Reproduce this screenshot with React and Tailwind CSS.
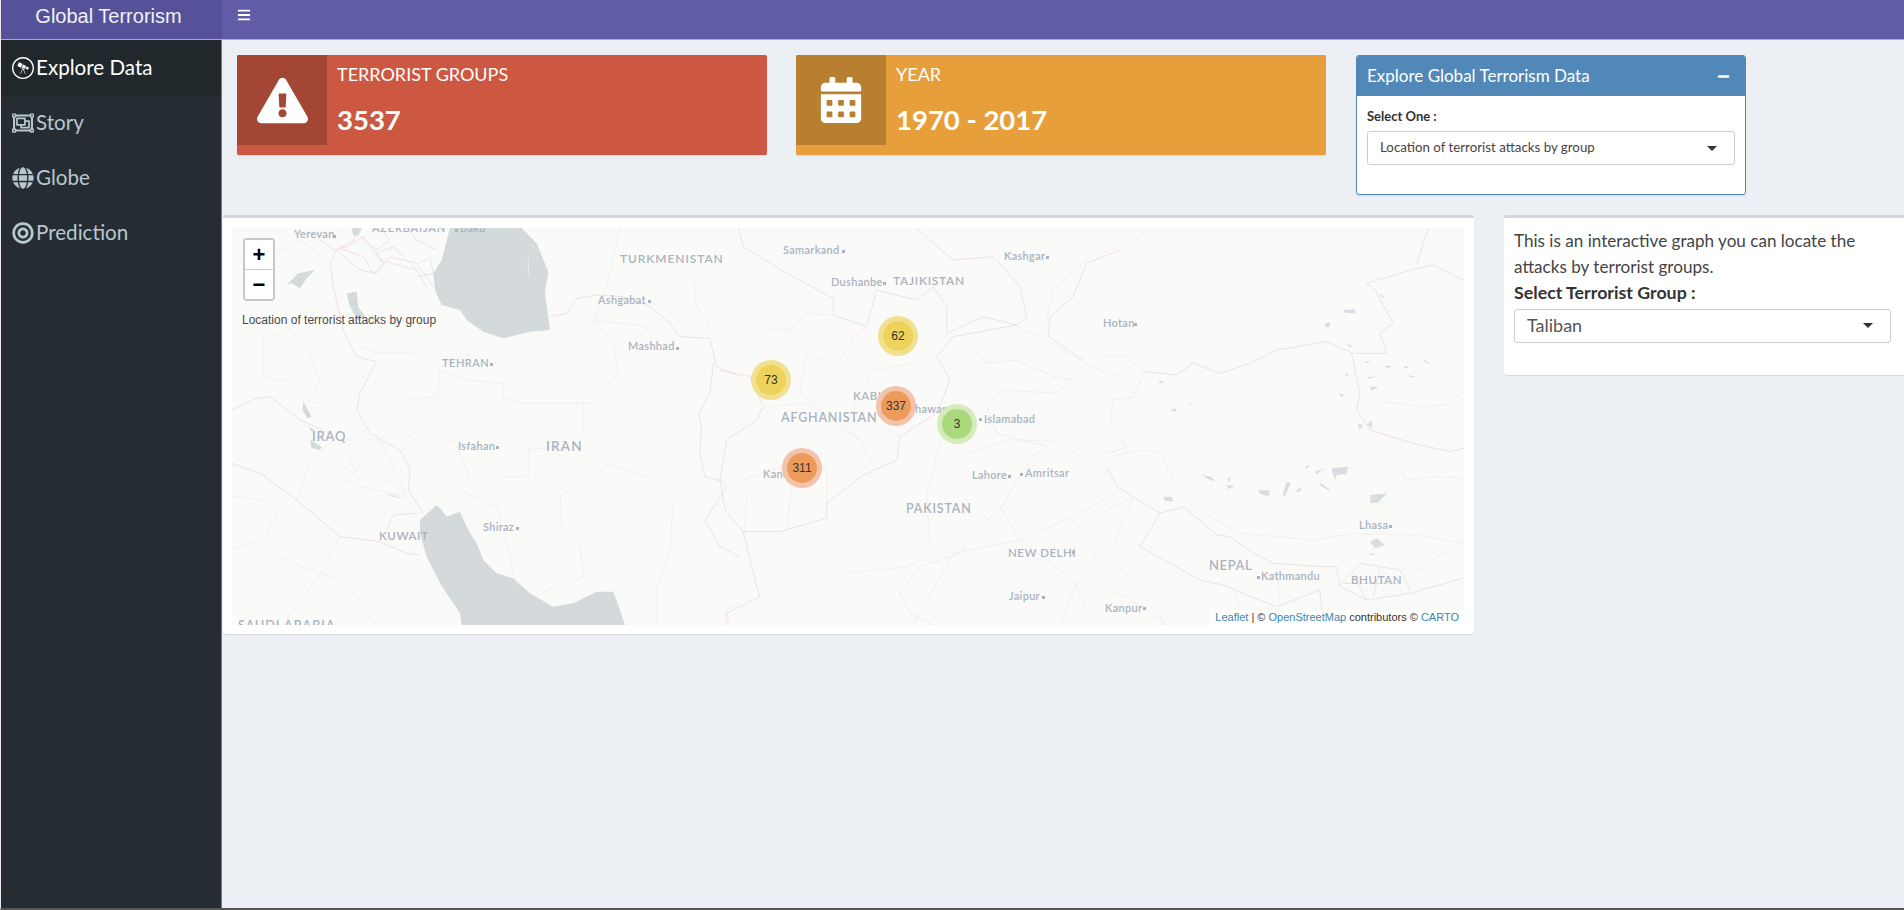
import React from 'react';
import { FaBars, FaBullseye, FaCalendarAlt, FaExclamationTriangle, FaGlobe, FaMinus, FaRegObjectGroup, FaWpexplorer } from 'react-icons/fa';

const navItems = [
  { label: 'Explore Data', icon: FaWpexplorer, active: true },
  { label: 'Story', icon: FaRegObjectGroup },
  { label: 'Globe', icon: FaGlobe },
  { label: 'Prediction', icon: FaBullseye }
];

// page coordinates: x, baseline y, text, font size, letter spacing, dot x, dot y
const labels = [
  [294, 238, 'Yerevan', 11, 0.3, 333, 235],
  [372, 232, 'AZERBAIJAN', 11, 0.8],
  [460, 232, 'Baku', 11, 0.3, 455, 229],
  [620, 263, 'TURKMENISTAN', 12, 0.9],
  [598, 304, 'Ashgabat', 11, 0.3, 648, 300],
  [628, 350, 'Mashhad', 11, 0.3, 676, 347],
  [442, 367, 'TEHRAN', 11, 0.5, 490, 363],
  [458, 450, 'Isfahan', 11, 0.3, 496, 446],
  [546, 451, 'IRAN', 13.5, 1.2],
  [312, 441, 'IRAQ', 13, 0.8],
  [379, 540, 'KUWAIT', 11.5, 0.6],
  [483, 531, 'Shiraz', 11, 0.3, 516, 527],
  [238, 630, 'SAUDI ARABIA', 12.5, 1],
  [783, 254, 'Samarkand', 11, 0.3, 842, 250],
  [831, 286, 'Dushanbe', 11, 0.3, 883, 282],
  [893, 285, 'TAJIKISTAN', 12, 0.7],
  [1004, 260, 'Kashgar', 11, 0.3, 1046, 256],
  [1103, 327, 'Hotan', 11, 0.3, 1134, 323],
  [853, 400, 'KABUL', 11.5, 0.6, 892, 395],
  [781, 422, 'AFGHANISTAN', 12.5, 0.8],
  [897, 413, 'Peshawar', 11, 0.3, 946, 409],
  [984, 423, 'Islamabad', 11, 0.3, 979, 418],
  [763, 478, 'Kandahar', 11, 0.3, 813, 472],
  [972, 479, 'Lahore', 11, 0.3, 1008, 475],
  [1025, 477, 'Amritsar', 11, 0.3, 1020, 473],
  [906, 513, 'PAKISTAN', 12.5, 0.8],
  [1008, 557, 'NEW DELHI', 11.5, 0.5, 1072, 551],
  [1009, 600, 'Jaipur', 11, 0.3, 1042, 596],
  [1105, 612, 'Kanpur', 11, 0.3, 1143, 607],
  [1209, 570, 'NEPAL', 13, 0.6],
  [1261, 580, 'Kathmandu', 11, 0.3, 1257, 576],
  [1351, 584, 'BHUTAN', 11.5, 0.6],
  [1359, 529, 'Lhasa', 11, 0.3, 1389, 525]
];

const clusters = [
  { n: 62, x: 898, y: 336, outer: 'bg-[#f1e08e]', inner: 'bg-[#edd25c]' },
  { n: 73, x: 771, y: 380, outer: 'bg-[#f1e08e]', inner: 'bg-[#edd25c]' },
  { n: 337, x: 896, y: 406, outer: 'bg-[#f3c3ab]', inner: 'bg-[#ed9b5b]' },
  { n: 3, x: 957, y: 424, outer: 'bg-[#d5ebbb]', inner: 'bg-[#a9d97c]' },
  { n: 311, x: 802, y: 468, outer: 'bg-[#f3c3ab]', inner: 'bg-[#ed9b5b]' }
];

function MapDrawing() {
  return (
    <svg viewBox="232 228 1232 397" className="block h-[397px] w-[1232px] bg-[#fafaf9]">
      {/* left part, traced at 3x from (220,220) */}
      <g transform="translate(220 220) scale(0.3333)" fill="none" strokeLinejoin="round" strokeWidth="2.2">
        <g fill="#d4dadc">
          <path d="M690 24L905 24L950 70L985 155L975 220L990 330L930 335L850 355L790 335L740 300L720 270L665 255L645 210L640 160L665 120L675 80Z" />
          <path d="M600 900L650 855L665 870L680 890L720 875L745 930L770 970L790 1020L830 1060L880 1075L930 1120L1000 1160L1060 1150L1130 1115L1180 1115L1200 1170L1215 1215L725 1215L720 1180L660 1090L620 1010L600 940Z" />
          <path d="M200 195L235 160L285 150L260 175L240 205L215 190Z" />
          <path d="M380 220L410 215L415 260L435 290L415 300L390 260Z" />
          <path d="M395 24L425 24L415 48L400 45Z" />
          <path d="M250 545L275 590L262 595L248 570Z" />
          <path d="M270 660L305 680L300 690L275 685Z" />
          <path d="M265 620L285 630L275 635Z" />
          <path d="M495 820L550 835L520 830Z" />
        </g>
        <path d="M925 115L925 165M930 70L960 100" stroke="#f4f5f5" strokeWidth="2" />
        <g stroke="#ebd9dc">
          <path d="M350 90L330 130L340 200L370 330L410 410L470 425L420 520L410 570L450 640L540 690L570 750L565 810L610 880" />
          <path d="M36 730L120 760L230 840L360 950L480 965L560 1000L600 1005" />
          <path d="M990 290L1040 280L1070 235L1130 225L1210 230L1290 260L1350 310L1380 350L1470 355L1490 440L1560 470" />
          <path d="M1480 430L1470 520L1435 580L1445 620L1440 700L1455 770L1510 785L1520 800L1455 900L1500 980L1560 1010" />
          <path d="M36 570L110 535L150 530L240 600L330 640" />
          <path d="M350 90L420 150L470 160L510 110L590 130L640 200" />
          <path d="M500 930L520 885L590 880" />
          <path d="M300 60L340 90L380 80L430 50L480 120L590 150" />
          <path d="M420 24L400 60L360 85L430 110L460 160L490 130L470 100L520 80L560 120L590 150L620 200" />
          <path d="M480 24L510 60L470 90L420 50M560 24L590 60L650 90M600 130L630 110L640 160L590 170" />
        </g>
        <g stroke="#f0e8e8" strokeWidth="1.8">
          <path d="M130 360L130 470L205 485L260 540L330 560" />
          <path d="M420 380L480 400L580 400L660 440L740 400L800 420L850 440" />
          <path d="M850 530L910 550L1120 550L1195 460L1180 370L1120 300L1160 200L1200 24" />
          <path d="M1090 550L1090 630L1000 680L925 690L925 770L850 770L810 800L750 770L700 660L590 660L510 610L570 540L650 530L720 610L790 540" />
          <path d="M1090 625L1165 735L1280 770L1360 850L1350 1000L1310 1100L1310 1215" />
          <path d="M1165 735L1020 830L1025 920L1080 970L1090 1070L960 1120" />
          <path d="M340 760L420 800L560 830L500 700L480 660L340 660L270 720L230 840" />
          <path d="M650 530L660 450L740 480L850 490L850 530" />
          <path d="M36 830L130 840L170 880L130 960L36 990" />
          <path d="M170 1010L300 1060L370 1080L470 1215" />
          <path d="M360 950L300 1060L190 1215" />
          <path d="M1420 170L1430 260L1470 320" />
          <path d="M1530 1215L1520 1170L1560 1150" />
          <path d="M1200 240L1120 300L1290 320L1260 350" />
          <path d="M750 770L720 810L830 860L850 930L890 1100" />
          <path d="M340 720L400 760L450 720L500 780L540 800M380 700L420 780" />
          <path d="M270 400L300 480L265 540M130 380L200 320L270 400" />
          <path d="M120 200L60 120M170 100L240 60L320 120" />
        </g>
      </g>
      {/* middle part, traced at 3x from (720,220) */}
      <g transform="translate(720 220) scale(0.3333)" fill="none" strokeLinejoin="round" strokeWidth="2.2">
        <g stroke="#ebd9dc">
          <path d="M55 24L70 80L200 160L340 235L340 285L440 320L470 210L590 240L640 200L680 260L680 340L790 290L890 315" />
          <path d="M0 450L90 470L130 560L110 600L20 660L0 780L15 870L70 935L180 935L320 895L320 850L430 765L530 720L540 650L600 610L650 580L690 480L650 410L700 350L890 315" />
          <path d="M70 935L110 1100L120 1130L20 1180L20 1215" />
          <path d="M830 120L900 200L920 290L890 315" />
          <path d="M1200 90L1100 130L1060 230L990 290L985 350L1090 420" />
          <path d="M820 110L700 120L640 70L590 24" />
          <path d="M1200 470L1120 445L1000 370L880 315" strokeDasharray="6 6" />
          <path d="M760 380L800 430L890 420L1000 470L1060 480L1010 520L850 510L800 560L830 640L980 680L940 710L880 800L840 870L800 900L720 1000L600 1040L540 1120L570 1180L640 1215" strokeDasharray="7 5" />
        </g>
        <g stroke="#f0e8e8" strokeWidth="1.8">
          <path d="M130 330L210 330L260 280L340 285" />
          <path d="M210 330L260 400L350 440L400 350L440 320" />
          <path d="M130 560L260 550L340 600L430 670L380 620L420 520L460 450L580 430" />
          <path d="M260 400L240 520L340 600L450 600L540 650" />
          <path d="M15 870L70 780L210 730L320 740L320 850" />
          <path d="M215 800L200 925" />
          <path d="M80 830L75 935" />
          <path d="M580 1215L700 1000L900 960L1080 880L1200 810" />
          <path d="M660 670L620 830L630 970" />
          <path d="M380 1060L560 1040L700 960" />
          <path d="M840 860L900 960L1060 1080L1100 1180" />
          <path d="M750 700L860 660L1000 660L1080 710" />
          <path d="M980 300L1000 210L1120 100" />
          <path d="M500 640L430 680L460 740" />
          <path d="M1060 900L1130 1000L1060 1110L1020 1215" />
        </g>
      </g>
      {/* right part, traced at 3x from (1100,220) */}
      <g transform="translate(1100 220) scale(0.3333)" fill="none" strokeLinejoin="round" strokeWidth="2.2">
        <g stroke="#ebd9dc">
          <path d="M140 455L230 465L280 430L360 460L450 430L530 390L680 365L760 400L860 400L840 340L880 310L825 210L800 190L950 145L1000 135L1060 165L1092 180" />
          <path d="M985 24L950 135" />
          <path d="M755 400L780 520L770 570L810 630L940 670L1050 695L1092 685" />
          <path d="M20 740L50 800L180 880L250 860L350 945L390 950L460 1000L520 1030L660 1040L710 1040L720 1100L800 1140L930 1120L1090 1075" />
          <path d="M180 880L120 980L300 1080L370 1095L450 1130L530 1160L660 1110L665 1170" />
          <path d="M715 1100L780 1030L900 1050L930 1110M760 1060L800 1140M840 1050L820 1130M730 1090L900 1090" />
          <path d="M940 1060L1090 960" strokeDasharray="6 5" />
          <path d="M0 410L70 405L135 455L100 530L40 540L30 600L80 680L30 700L0 690" strokeDasharray="6 5" />
        </g>
        <g stroke="#f0e8e8" strokeWidth="1.8">
          <path d="M0 100L90 70L150 24" />
          <path d="M850 545L970 560L1040 555L1092 515" />
          <path d="M30 710L130 690L190 700L205 750L220 780" />
          <path d="M280 860L420 940L640 960L760 940L950 945L1092 970" />
          <path d="M890 725L920 780L1000 770L1092 775" />
          <path d="M0 880L100 830L30 1000L200 1215" />
          <path d="M0 1110L80 1130L200 1215" />
          <path d="M310 1000L360 950" />
          <path d="M530 1040L540 1160M400 1100L420 1160" />
        </g>
        <g fill="#d8dde0">
          <path d="M730 270L765 268L765 280L735 278Z" />
          <path d="M676 310L692 308L688 322L676 320Z" />
          <path d="M742 370L765 385L745 378Z" />
          <path d="M840 222L858 235L842 230Z" />
          <path d="M797 422L813 426L797 428Z" />
          <path d="M855 435L880 440L860 444Z" />
          <path d="M912 437L930 440L915 446Z" />
          <path d="M970 418L995 432L975 426Z" />
          <path d="M800 470L830 470L805 476Z" />
          <path d="M925 465L945 470L930 472Z" />
          <path d="M810 500L835 500L815 512Z" />
          <path d="M735 458L748 470L738 468Z" />
          <path d="M715 520L735 526L722 530Z" />
          <path d="M775 612L790 615L778 630Z" />
          <path d="M800 615L815 600L818 625Z" />
          <path d="M175 483L195 484L180 490Z" />
          <path d="M210 570L232 565L225 575Z" />
          <path d="M262 545L278 560L265 552Z" />
          <path d="M305 765L335 770L345 785L320 775Z" />
          <path d="M380 795L405 798L385 808Z" />
          <path d="M382 775L392 772L388 790Z" />
          <path d="M475 810L510 812L505 828L480 822Z" />
          <path d="M560 785L572 788L555 830L548 825Z" />
          <path d="M585 815L605 800L600 815Z" />
          <path d="M660 788L692 810L688 812L660 795Z" />
          <path d="M645 755L675 745L650 762Z" />
          <path d="M695 745L745 740L740 762L710 765L705 780L698 760Z" />
          <path d="M615 740L630 735L620 746Z" />
          <path d="M810 825L860 820L835 848L812 850Z" />
          <path d="M190 830L215 830L220 845L195 842Z" />
          <path d="M810 965L830 955L855 975L825 985Z" />
          <path d="M805 1000L828 1002L812 1006Z" />
        </g>
      </g>
      <g className="font-['Lato']" fill="#aab3bf" fontWeight="600">
        {labels.map(([x, y, text, size, spacing, dotX, dotY]) => (
          <g key={text}>
            <text x={x} y={y} fontSize={size} letterSpacing={spacing}>{text}</text>
            {dotX ? <rect x={dotX} y={dotY} width="3" height="3" /> : null}
          </g>
        ))}
      </g>
    </svg>
  );
}

function InfoBox({ icon: Icon, iconSize, title, value, bar, dark }) {
  return (
    <div className={`flex h-[100px] w-[530px] shrink-0 items-start rounded-[2px] ${bar} text-white shadow-[0_1px_1px_rgba(0,0,0,0.1)]`}>
      <div className={`flex h-[90px] w-[90px] shrink-0 items-center justify-center rounded-tl-[2px] ${dark}`}>
        <Icon className={iconSize} />
      </div>
      <div className="pl-[10px] pt-[7px]">
        <div className="text-[18px] leading-[24px]">{title}</div>
        <div className="mt-[16px] text-[27.5px] font-bold leading-[36px]">{value}</div>
      </div>
    </div>
  );
}

function Caret() {
  return <span className="h-0 w-0 border-x-[5px] border-t-[5px] border-x-transparent border-t-[#333]" />;
}

export default function App() {
  return (
    <div className="flex h-[910px] w-[1904px] flex-col overflow-hidden border-b-2 border-l border-b-[#555] border-l-[#e8e8e8] bg-[#ecf0f5] font-['Lato',sans-serif] text-[#333]">
      <header className="flex h-[40px] shrink-0 border-b border-b-[#a9a7d4]">
        <div className="flex w-[221px] items-center justify-center bg-[#555299] pb-[8px] pr-[6px] font-['Liberation_Sans',sans-serif] text-[20px] text-[#f1f1f6]">
          Global Terrorism
        </div>
        <div className="flex flex-1 items-center bg-[#605ca8] pb-[9px] pl-[15px] text-white">
          <FaBars className="text-[14px]" />
        </div>
      </header>

      <div className="flex min-h-0 flex-1">
        <aside className="w-[221px] shrink-0 border-r border-r-[#777c80] bg-[#252d33]">
          {navItems.map(({ label, icon: Icon, active }) => (
            <div
              key={label}
              className={`flex h-[55px] items-center gap-[2px] pl-[11px] text-[20.6px] ${active ? 'bg-[#20282c] text-white' : 'text-[#b8c7ce]'}`}
            >
              <Icon className="text-[22px]" />
              <span>{label}</span>
            </div>
          ))}
        </aside>

        <main className="min-w-0 flex-1">
          <div className="flex items-start pl-[15px] pt-[15px]">
            <InfoBox
              icon={FaExclamationTriangle}
              iconSize="text-[51px]"
              title="TERRORIST GROUPS"
              value="3537"
              bar="bg-[#cd5842]"
              dark="bg-[#a44634]"
            />
            <div className="ml-[29px]">
              <InfoBox
                icon={FaCalendarAlt}
                iconSize="text-[46px]"
                title="YEAR"
                value="1970 - 2017"
                bar="bg-[#e79f3c]"
                dark="bg-[#b97f30]"
              />
            </div>
            <section className="ml-[30px] h-[140px] w-[390px] shrink-0 overflow-hidden rounded-[3px] border border-[#5288b8] bg-white shadow-[0_1px_1px_rgba(0,0,0,0.1)]">
              <div className="flex h-[40px] items-center justify-between bg-[#5288b8] pl-[10px] pr-[15px] text-[17px] text-white">
                <span>Explore Global Terrorism Data</span>
                <FaMinus className="text-[13px]" />
              </div>
              <div className="px-[10px] pt-[10px]">
                <div className="text-[13px] font-bold leading-[20px]">Select One :</div>
                <div className="mt-[5px] flex h-[34px] items-center justify-between rounded-[3px] border border-[#ccc] pl-[12px] pr-[17px] text-[13.3px] text-[#444]">
                  <span>Location of terrorist attacks by group</span>
                  <Caret />
                </div>
              </div>
            </section>
          </div>

          <div className="mt-[20px] flex items-start pl-[1px]">
            <section className="h-[419px] w-[1251px] shrink-0 rounded-[3px] border-t-[3px] border-t-[#d2d6de] bg-white px-[9px] pt-[10px] shadow-[0_1px_1px_rgba(0,0,0,0.1)]">
              <div className="relative h-[397px] w-[1232px] overflow-hidden">
                <MapDrawing />
                <div className="absolute left-[11px] top-[10px] w-[32px] rounded-[4px] border-2 border-[rgba(0,0,0,0.2)] bg-clip-padding font-['Liberation_Sans',sans-serif] text-black">
                  <div className="flex h-[30px] items-center justify-center rounded-t-[2px] border-b border-b-[#ccc] bg-white text-[22px] font-bold">+</div>
                  <div className="flex h-[29px] items-center justify-center rounded-b-[2px] bg-white text-[22px] font-bold">&minus;</div>
                </div>
                <div className="absolute left-[10px] top-[85px] font-['Liberation_Sans',sans-serif] text-[12px] leading-[14px] text-[#4a4a4a]">
                  Location of terrorist attacks by group
                </div>
                {clusters.map((c) => (
                  <div
                    key={c.n}
                    className={`absolute flex h-[40px] w-[40px] items-center justify-center rounded-full ${c.outer}`}
                    style={{ left: c.x - 232 - 20, top: c.y - 228 - 20 }}
                  >
                    <div className={`flex h-[30px] w-[30px] items-center justify-center rounded-full font-['Liberation_Sans',sans-serif] text-[12px] text-[#333] ${c.inner}`}>
                      {c.n}
                    </div>
                  </div>
                ))}
                <div className="absolute bottom-0 right-0 bg-[rgba(255,255,255,0.7)] px-[5px] font-['Liberation_Sans',sans-serif] text-[11px] leading-[15px] text-[#333]">
                  <span className="text-[#3a87ad]">Leaflet</span> | © <span className="text-[#3a87ad]">OpenStreetMap</span> contributors © <span className="text-[#3a87ad]">CARTO</span>
                </div>
              </div>
            </section>

            <section className="ml-[30px] h-[160px] flex-1 rounded-l-[3px] border-t-[3px] border-t-[#d2d6de] bg-white pl-[10px] pr-[13px] pt-[10px] shadow-[0_1px_1px_rgba(0,0,0,0.1)]">
              <p className="text-[17.1px] leading-[26px] text-[#444]">
                This is an interactive graph you can locate the attacks by terrorist groups.
              </p>
              <div className="-mt-[1px] text-[17.8px] font-bold leading-[26px]">Select Terrorist Group :</div>
              <div className="mt-[4px] flex h-[34px] items-center justify-between rounded-[3px] border border-[#ccc] pb-[2px] pl-[12px] pr-[17px] text-[18px] text-[#555]">
                <span>Taliban</span>
                <Caret />
              </div>
            </section>
          </div>
        </main>
      </div>
    </div>
  );
}
